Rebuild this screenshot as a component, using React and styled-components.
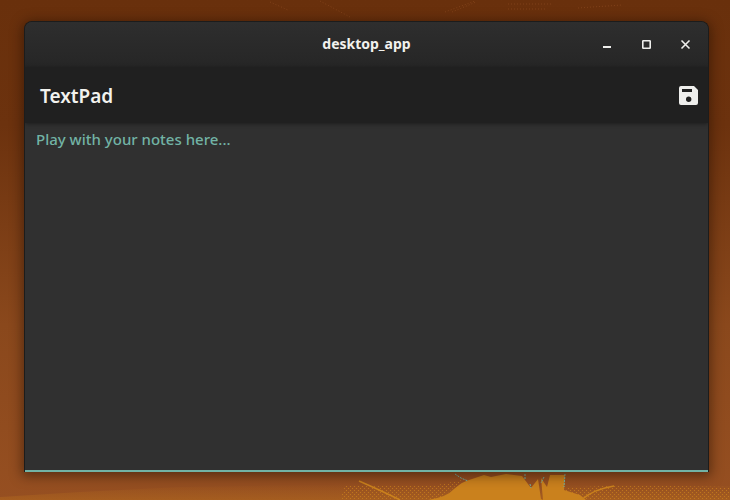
import React, { useState } from "react";
import styled, { createGlobalStyle } from "styled-components";

const GlobalStyle = createGlobalStyle`
  *, *::before, *::after { box-sizing: border-box; }
  body { margin: 0; font-family: "Noto Sans", "Open Sans", sans-serif; }
`;

const Desktop = styled.div`
  position: relative;
  isolation: isolate;
  display: flex;
  min-height: 100vh;
  padding: 21px 21px 28px 24px;
  overflow: hidden;
  background: linear-gradient(180deg, #69300c 0%, #6c320e 25%, #8a481c 65%, #964f21 100%);
`;

const Wallpaper = styled.svg`
  position: absolute;
  left: 0;
  bottom: 0;
  z-index: -1;
  width: 100%;
  height: 100%;
`;

const AppWindow = styled.main`
  display: flex;
  flex: 1;
  flex-direction: column;
  min-width: 0;
  overflow: hidden;
  border: 1px solid #1c1c1c;
  border-bottom: 0;
  border-radius: 8px 8px 0 0;
  background: #303030;
  box-shadow: 0 2px 12px 2px rgba(30, 14, 4, 0.5);
`;

const TitleBar = styled.header`
  display: grid;
  grid-template-columns: 1fr auto 1fr;
  align-items: center;
  height: 45px;
  padding: 0 9px 1px;
  background: linear-gradient(180deg, #2e2e2e, #262626);
`;

const WindowTitle = styled.div`
  grid-column: 2;
  color: #f2f2ee;
  font-size: 14px;
  font-weight: 700;
  line-height: 20px;
`;

const WindowControls = styled.div`
  display: flex;
  justify-content: flex-end;
  gap: 11px;
`;

const IconButton = styled.button`
  display: grid;
  place-items: center;
  width: ${({ $size }) => $size}px;
  height: ${({ $size }) => $size}px;
  padding: 0;
  border: 0;
  background: none;
  color: #eeeeec;
  cursor: pointer;
`;

const Toolbar = styled.div`
  display: flex;
  align-items: center;
  justify-content: space-between;
  height: 56px;
  padding: 0 7px 0 15px;
  background: #202020;
  box-shadow: 0 1px 4px rgba(0, 0, 0, 0.4);
  z-index: 1;
`;

const AppName = styled.h1`
  margin: 0;
  padding-top: 2px;
  color: #f2f2ee;
  font-size: 19px;
  font-weight: 600;
  line-height: 28px;
`;

const NoteInput = styled.textarea`
  flex: 1;
  width: 100%;
  padding: 4px 11px;
  border: 0;
  border-bottom: 2px solid #72b3a5;
  outline: 0;
  resize: none;
  background: transparent;
  color: #eeeeec;
  font-family: "Noto Sans", "Open Sans", sans-serif;
  font-size: 15px;
  font-weight: 500;
  line-height: 24px;

  &::placeholder {
    color: #72b3a5;
    opacity: 1;
  }
`;

function DesktopArt() {
  return (
    <Wallpaper viewBox="0 0 730 500" preserveAspectRatio="xMidYMax slice" aria-hidden="true">
      <defs>
        <linearGradient id="glow" x1="0" y1="0" x2="0" y2="1">
          <stop offset="0" stopColor="#c87e1c" stopOpacity="0" />
          <stop offset="1" stopColor="#c87e1c" stopOpacity="0.3" />
        </linearGradient>
        <pattern id="grain" width="4" height="4" patternUnits="userSpaceOnUse">
          <path d="M0 0h1v1H0zM2 2h1v1H2z" fill="#c87e1c" />
        </pattern>
      </defs>
      <g fill="none" stroke="#8a481f" strokeOpacity="0.7" strokeDasharray="1 2">
        <path d="M270 2L288 10M320 1L350 17M445 12L475 1M452 12L476 2M508 4H552M508 9H545M578 8L622 5" />
      </g>
      <path d="M0 497Q90 491 180 487L360 484L730 486V500H0z" fill="url(#glow)" />
      <path d="M345 486H432L462 480L440 500H340zM565 488L620 485L730 487V500H560z" fill="url(#grain)" opacity="0.8" />
      <path d="M359 481Q382 491 400 500M581 500Q594 489 614 486" fill="none" stroke="#ca811d" strokeWidth="1.5" />
      <path d="M428 500Q447 497 454 489Q463 481 472 479L484 475L491 477L506 474L522 476L531 488L538 479L541 499L543 500L541 478L547 487L550 475H565L564 490L580 495L586 500z" fill="#ca811d" />
      <path d="M455 474L461 478L468 481M525 474V480M530 484L531 488M544 477L541 483M565 474L564 487" fill="none" stroke="#72b3a5" strokeDasharray="2 1" />
    </Wallpaper>
  );
}

export default function App() {
  const [note, setNote] = useState("");

  return (
    <>
      <GlobalStyle />
      <Desktop>
        <DesktopArt />
        <AppWindow>
          <TitleBar>
            <WindowTitle>desktop_app</WindowTitle>
            <WindowControls>
              <IconButton $size={28} type="button" aria-label="Minimize">
                <svg width="16" height="16" viewBox="0 0 16 16" aria-hidden="true">
                  <path d="M4 10h8v2H4z" fill="currentColor" />
                </svg>
              </IconButton>
              <IconButton $size={28} type="button" aria-label="Maximize">
                <svg width="16" height="16" viewBox="0 0 16 16" aria-hidden="true">
                  <rect x="4.800" y="4.800" width="7.400" height="7.400" rx="0.5" fill="none" stroke="currentColor" strokeWidth="1.600" />
                </svg>
              </IconButton>
              <IconButton $size={28} type="button" aria-label="Close">
                <svg width="16" height="16" viewBox="0 0 16 16" aria-hidden="true">
                  <path d="M4.500 4.500l8 8M12.500 4.500l-8 8" fill="none" stroke="currentColor" strokeWidth="1.600" />
                </svg>
              </IconButton>
            </WindowControls>
          </TitleBar>
          <Toolbar>
            <AppName>TextPad</AppName>
            <IconButton $size={24} type="button" aria-label="Save">
              <svg width="24" height="24" viewBox="0 0 24 24" aria-hidden="true">
                <path
                  d="M17 3H4a2 2 0 0 0-2 2v15a2 2 0 0 0 2 2h15a2 2 0 0 0 2-2V7zM11.700 19a2.700 2.700 0 1 1 0-5.400 2.700 2.700 0 0 1 0 5.400zM15 9H5V6h10z"
                  fill="currentColor"
                />
              </svg>
            </IconButton>
          </Toolbar>
          <NoteInput
            aria-label="Notes"
            placeholder="Play with your notes here..."
            value={note}
            onChange={(event) => setNote(event.target.value)}
          />
        </AppWindow>
      </Desktop>
    </>
  );
}
